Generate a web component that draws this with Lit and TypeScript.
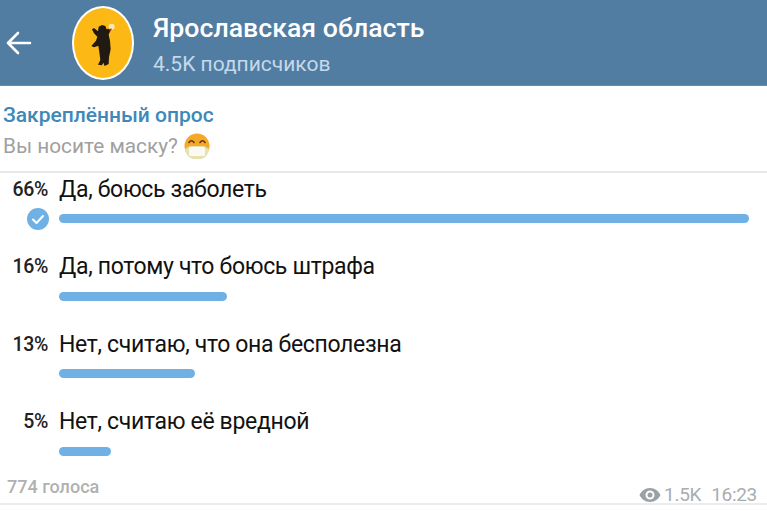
import { LitElement, html, css, svg } from "lit";
import { customElement } from "lit/decorators.js";

const rows = [
  { pct: "66%", label: "Да, боюсь заболеть", w: 690, checked: true },
  { pct: "16%", label: "Да, потому что боюсь штрафа", w: 168, checked: false },
  { pct: "13%", label: "Нет, считаю, что она бесполезна", w: 136, checked: false },
  { pct: "5%", label: "Нет, считаю её вредной", w: 52, checked: false },
];

@customElement("app-root")
export class AppRoot extends LitElement {
  static styles = css`
    :host {
      display: block;
      width: 767px;
      height: 511px;
      overflow: hidden;
      background: #fff;
      font-family: Roboto, "Noto Sans", sans-serif;
    }
    .header {
      height: 86px;
      background: #527da3;
      border-bottom: 1px solid #6d8ba6;
      box-sizing: border-box;
      display: flex;
      align-items: center;
      padding-left: 6px;
    }
    .back { width: 26px; height: 26px; flex: none; margin-right: 40px; }
    .avatar { width: 64px; height: 76px; flex: none; margin-right: 18px; margin-left: -1px; }
    .titles { display: flex; flex-direction: column; gap: 9px; align-self: flex-start; padding-top: 13px; }
    .title { font-size: 26.7px; font-weight: 500; line-height: 30px; color: #fff; white-space: nowrap; }
    .sub { font-size: 21px; line-height: 24px; color: #c4d9ea; white-space: nowrap; }
    .pin { padding: 16px 0 0 3px; height: 87px; box-sizing: border-box; border-bottom: 2px solid #e8e8e8; }
    .pin-title { font-size: 21px; font-weight: 500; line-height: 26px; color: #4088b8; }
    .pin-q { display: flex; align-items: center; gap: 6px; font-size: 20.8px; line-height: 28px; color: #a0a0a0; margin-top: 4px; }
    .emoji { width: 26px; height: 27px; flex: none; }
    .rows { display: flex; flex-direction: column; }
    .row {
      height: 77.5px;
      display: grid;
      grid-template-columns: 48px 1fr;
      column-gap: 11px;
      grid-template-rows: 32px 27px;
      align-items: center;
    }
    .pct { font-size: 19.5px; font-weight: 500; letter-spacing: -0.3px; color: #222; text-align: right; }
    .label { font-size: 23px; letter-spacing: -0.33px; color: #111; white-space: nowrap; }
    .check-cell { display: flex; justify-content: flex-end; margin-right: -1px; }
    .check { width: 22px; height: 22px; display: block; }
    .bar { height: 9px; border-radius: 5px; background: #6fb1e4; }
    .foot {
      display: flex;
      justify-content: space-between;
      align-items: flex-start;
      box-sizing: border-box;
      padding: 0 10px 0 7px;
      margin-top: -7px;
      color: #b0b0b0;
      height: 29px;
      border-bottom: 2px solid #ececec;
    }
    .votes { font-size: 18px; font-weight: 500; line-height: 22px; }
    .meta { display: flex; align-items: center; gap: 10px; font-size: 19px; letter-spacing: -0.3px; line-height: 22px; color: #a8adb2; margin-top: 8px; }
    .views { display: flex; align-items: center; gap: 3px; }
    .eye { width: 22px; height: 16px; }
  `;

  private bear() {
    return svg`
      <ellipse cx="32" cy="38" rx="31" ry="37" fill="#fff"/>
      <ellipse cx="32" cy="38" rx="29" ry="35" fill="#fcb814"/>
      <g transform="translate(-1 -1) scale(0.3333)">
        <circle cx="125" cy="68" r="9" fill="#f6e8b8"/>
        <path d="M112 92 L124 74" stroke="#8a3a1a" stroke-width="4"/>
        <path fill="#201a12" d="M86 68 L96 63 L106 66 L110 76 L118 74 L120 80 L116 92 L120 110 L122 135 L117 160 L116 180 L104 186 L100 176 L96 184 L84 182 L91 168 L88 145 L85 125 L72 130 L64 126 L78 110 L82 98 L72 88 L66 76 L72 72 L84 82 Z"/>
      </g>
    `;
  }

  render() {
    return html`
      <div class="header">
        <svg class="back" viewBox="0 0 26 26" fill="none" stroke="#fff" stroke-width="2.6" stroke-linecap="round" stroke-linejoin="round">
          <path d="M2 13 H24 M12 3 L2 13 L12 23"/>
        </svg>
        <svg class="avatar" viewBox="0 0 64 76">${this.bear()}</svg>
        <div class="titles">
          <div class="title">Ярославская область</div>
          <div class="sub">4.5K подписчиков</div>
        </div>
      </div>
      <div class="pin">
        <div class="pin-title">Закреплённый опрос</div>
        <div class="pin-q">
          <span>Вы носите маску?</span>
          <svg class="emoji" viewBox="0 0 26 27">
            <circle cx="13" cy="13" r="12.5" fill="#f6a828"/>
            <path d="M1 16 L6 13 H20 L25 16 Q24 24 17 26 H9 Q2 24 1 16 Z" fill="#e6e2b0"/>
            <rect x="5" y="14" width="16" height="9" rx="1.500" fill="#fbfaf2"/>
            <path d="M5 9.500 q2.500-3.500 5 0 M16 9.500 q2.500-3.500 5 0" fill="none" stroke="#5b3a10" stroke-width="1.600" stroke-linecap="round"/>
          </svg>
        </div>
      </div>
      <div class="rows">
        ${rows.map(
          (r) => html`
            <div class="row">
              <div class="pct">${r.pct}</div>
              <div class="label">${r.label}</div>
              <div class="check-cell">
                ${r.checked
                  ? html`<svg class="check" viewBox="0 0 22 22">
                      <circle cx="11" cy="11" r="11" fill="#6fb1e4"/>
                      <path d="M6 11.500 L9.500 15 L16 8" fill="none" stroke="#fff" stroke-width="2" stroke-linecap="round" stroke-linejoin="round"/>
                    </svg>`
                  : ""}
              </div>
              <div class="bar" style="width:${r.w}px"></div>
            </div>
          `
        )}
      </div>
      <div class="foot">
        <div class="votes">774 голоса</div>
        <div class="meta">
          <span class="views">
            <svg class="eye" viewBox="0 0 22 16">
              <path fill="#9aa0a3" fill-rule="evenodd" d="M11 1 C6 1 2.500 4 0.500 8 C2.500 12 6 15 11 15 C16 15 19.500 12 21.500 8 C19.500 4 16 1 11 1 Z M11 3.500 A4.500 4.500 0 1 1 11 12.500 A4.500 4.500 0 1 1 11 3.500 Z"/>
              <circle cx="11" cy="8" r="2.500" fill="#9aa0a3"/>
            </svg>
            1.5K
          </span>
          <span>16:23</span>
        </div>
      </div>
    `;
  }
}
